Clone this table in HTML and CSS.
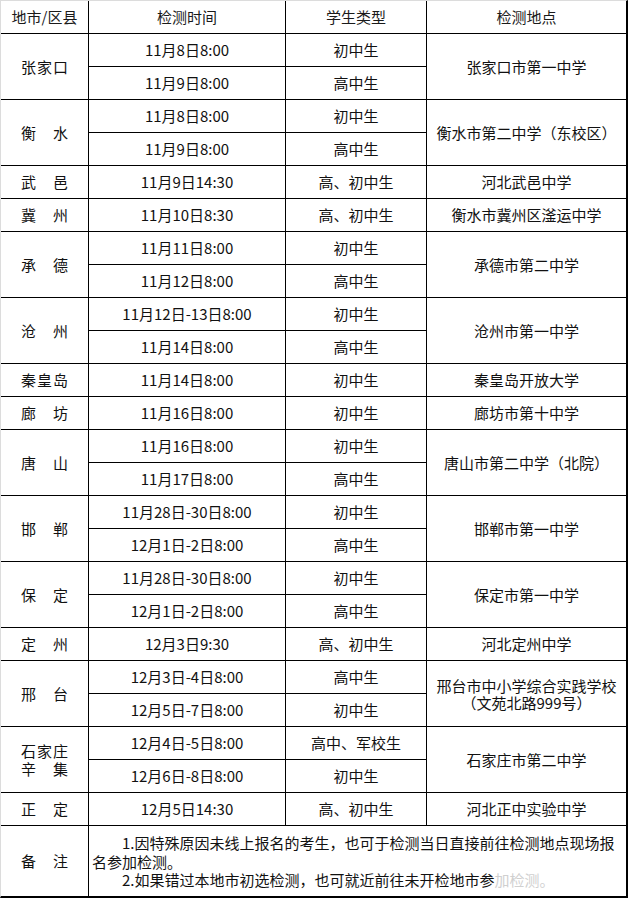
FILE: index.html
```html
<!DOCTYPE html>
<html lang="zh-CN">
<head>
<meta charset="utf-8">
<title>检测安排</title>
<link rel="stylesheet" href="styles.css">
</head>
<body>
<div class="sheet">
  <div class="c head">地市/区县</div>
  <div class="c head">检测时间</div>
  <div class="c head">学生类型</div>
  <div class="c head">检测地点</div>

  <div class="c r2 city"><span class="nm">张家口</span></div>
  <div class="c">11月8日8:00</div>
  <div class="c">初中生</div>
  <div class="c r2">张家口市第一中学</div>
  <div class="c">11月9日8:00</div>
  <div class="c">高中生</div>

  <div class="c r2 city"><span class="nm">衡水</span></div>
  <div class="c">11月8日8:00</div>
  <div class="c">初中生</div>
  <div class="c r2">衡水市第二中学（东校区）</div>
  <div class="c">11月9日8:00</div>
  <div class="c">高中生</div>

  <div class="c city"><span class="nm">武邑</span></div>
  <div class="c">11月9日14:30</div>
  <div class="c">高、初中生</div>
  <div class="c">河北武邑中学</div>

  <div class="c city"><span class="nm">冀州</span></div>
  <div class="c">11月10日8:30</div>
  <div class="c">高、初中生</div>
  <div class="c">衡水市冀州区滏运中学</div>

  <div class="c r2 city"><span class="nm">承德</span></div>
  <div class="c">11月11日8:00</div>
  <div class="c">初中生</div>
  <div class="c r2">承德市第二中学</div>
  <div class="c">11月12日8:00</div>
  <div class="c">高中生</div>

  <div class="c r2 city"><span class="nm">沧州</span></div>
  <div class="c">11月12日-13日8:00</div>
  <div class="c">初中生</div>
  <div class="c r2">沧州市第一中学</div>
  <div class="c">11月14日8:00</div>
  <div class="c">高中生</div>

  <div class="c city"><span class="nm">秦皇岛</span></div>
  <div class="c">11月14日8:00</div>
  <div class="c">初中生</div>
  <div class="c">秦皇岛开放大学</div>

  <div class="c city"><span class="nm">廊坊</span></div>
  <div class="c">11月16日8:00</div>
  <div class="c">初中生</div>
  <div class="c">廊坊市第十中学</div>

  <div class="c r2 city"><span class="nm">唐山</span></div>
  <div class="c">11月16日8:00</div>
  <div class="c">初中生</div>
  <div class="c r2">唐山市第二中学（北院）</div>
  <div class="c">11月17日8:00</div>
  <div class="c">高中生</div>

  <div class="c r2 city"><span class="nm">邯郸</span></div>
  <div class="c">11月28日-30日8:00</div>
  <div class="c">初中生</div>
  <div class="c r2">邯郸市第一中学</div>
  <div class="c">12月1日-2日8:00</div>
  <div class="c">高中生</div>

  <div class="c r2 city"><span class="nm">保定</span></div>
  <div class="c">11月28日-30日8:00</div>
  <div class="c">初中生</div>
  <div class="c r2">保定市第一中学</div>
  <div class="c">12月1日-2日8:00</div>
  <div class="c">高中生</div>

  <div class="c city"><span class="nm">定州</span></div>
  <div class="c">12月3日9:30</div>
  <div class="c">高、初中生</div>
  <div class="c">河北定州中学</div>

  <div class="c r2 city"><span class="nm">邢台</span></div>
  <div class="c">12月3日-4日8:00</div>
  <div class="c">高中生</div>
  <div class="c r2 multi">邢台市中小学综合实践学校<br>（文苑北路999号）</div>
  <div class="c">12月5日-7日8:00</div>
  <div class="c">初中生</div>

  <div class="c r2 city"><span class="nm">石家庄<br>辛集</span></div>
  <div class="c">12月4日-5日8:00</div>
  <div class="c">高中、军校生</div>
  <div class="c r2">石家庄市第二中学</div>
  <div class="c">12月6日-8日8:00</div>
  <div class="c">初中生</div>

  <div class="c city"><span class="nm">正定</span></div>
  <div class="c">12月5日14:30</div>
  <div class="c">高、初中生</div>
  <div class="c">河北正中实验中学</div>

  <div class="c city"><span class="nm">备注</span></div>
  <div class="c note">
    <p>1.因特殊原因未线上报名的考生，也可于检测当日直接前往检测地点现场报名参加检测。</p>
    <p>2.如果错过本地市初选检测，也可就近前往未开检地市参<span class="faded">加检测。</span></p>
  </div>
</div>
</body>
</html>
```

FILE: styles.css
```css
html, body {
  margin: 0;
  padding: 0;
  background: #fff;
}

body {
  font-family: "Noto Sans CJK SC", "Noto Sans", sans-serif;
  font-size: 15px;
  color: #111;
}

.sheet {
  width: 628px;
  box-sizing: border-box;
  display: grid;
  grid-template-columns: 87px 196px 140px 199px;
  grid-template-rows: repeat(25, 32px) 70px;
  gap: 1px;
  background: #000;
  border-top: 1px solid #dcdcdc;
  border-left: 1px solid #dcdcdc;
  border-right: 2px solid #000;
  border-bottom: 2px solid #000;
}

.c {
  background: #fff;
  display: flex;
  align-items: center;
  justify-content: center;
  text-align: center;
  line-height: 18px;
  white-space: nowrap;
}

.head {
  color: #1a1a1a;
}

.r2 {
  grid-row: span 2;
}

.multi {
  line-height: 17px;
}

.nm {
  display: block;
  width: 47px;
  text-align: justify;
  text-align-last: justify;
  line-height: 18px;
}

.note {
  grid-column: span 3;
  display: block;
  text-align: left;
  white-space: normal;
  padding: 8px 6px 0 3px;
  line-height: 18.5px;
}

.note p {
  margin: 0;
  text-indent: 2em;
}

.faded {
  color: #d0d0d0;
}
```
